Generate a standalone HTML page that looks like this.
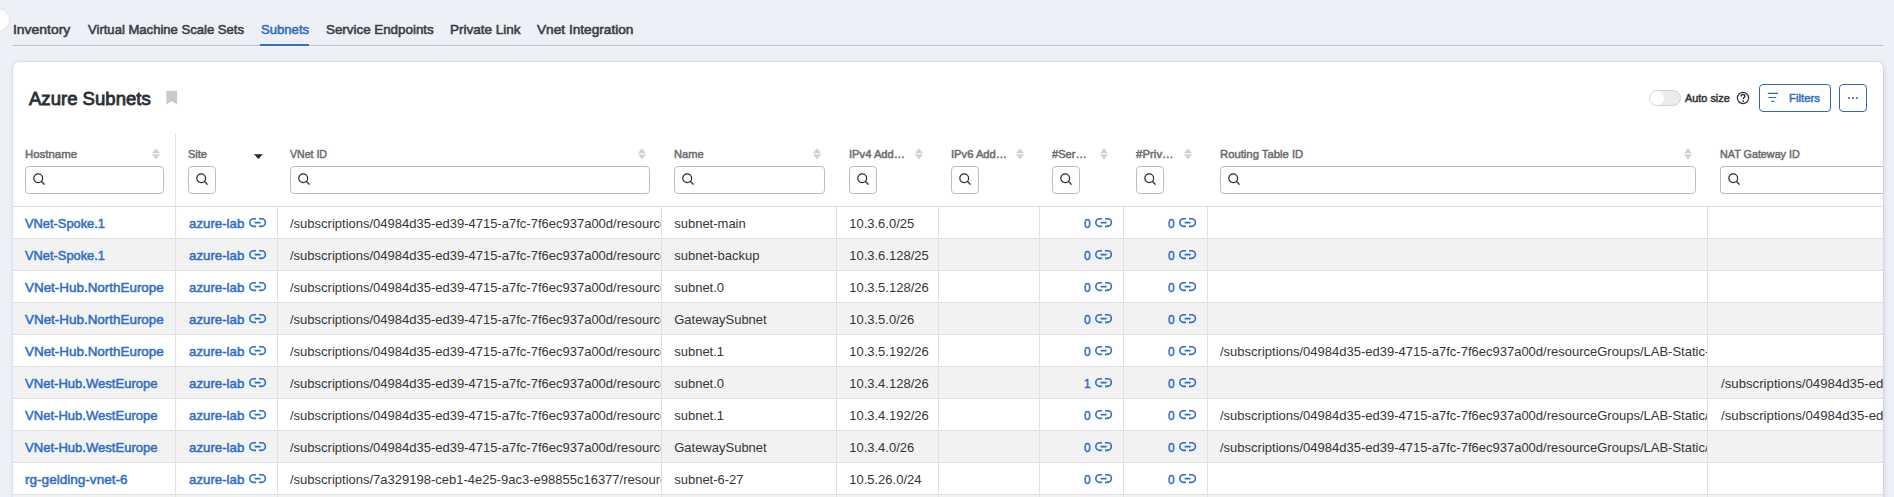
<!DOCTYPE html>
<html><head><meta charset="utf-8"><style>
html,body{margin:0;padding:0;}
body{width:1894px;height:497px;overflow:hidden;background:#edf0f7;position:relative;font-family:"Liberation Sans",sans-serif;}
.t{position:absolute;white-space:nowrap;transform-origin:0 0;}
.r{position:absolute;}
</style></head><body>
<div class="r" style="left:-13px;top:9px;width:22px;height:22px;border-radius:50%;background:#fff;box-shadow:0 0 3px rgba(0,0,0,.12);"></div>
<div class="t" style="left:13.30px;top:22.90px;font-size:13px;line-height:13px;color:#3a3e45;-webkit-text-stroke:0.55px #3a3e45;transform:scaleX(1.0716);">Inventory</div>
<div class="t" style="left:87.70px;top:22.90px;font-size:13px;line-height:13px;color:#3a3e45;-webkit-text-stroke:0.55px #3a3e45;transform:scaleX(1.0057);">Virtual Machine Scale Sets</div>
<div class="t" style="left:260.70px;top:22.90px;font-size:13px;line-height:13px;color:#2f6fc2;-webkit-text-stroke:0.55px #2f6fc2;transform:scaleX(1.0083);">Subnets</div>
<div class="t" style="left:325.60px;top:22.90px;font-size:13px;line-height:13px;color:#3a3e45;-webkit-text-stroke:0.55px #3a3e45;transform:scaleX(1.0279);">Service Endpoints</div>
<div class="t" style="left:449.80px;top:22.90px;font-size:13px;line-height:13px;color:#3a3e45;-webkit-text-stroke:0.55px #3a3e45;transform:scaleX(1.0395);">Private Link</div>
<div class="t" style="left:536.90px;top:22.90px;font-size:13px;line-height:13px;color:#3a3e45;-webkit-text-stroke:0.55px #3a3e45;transform:scaleX(1.0503);">Vnet Integration</div>
<div class="r" style="left:13px;top:45px;width:1870px;height:1px;background:#bcc0c8;"></div>
<div class="r" style="left:13px;top:46px;width:1870px;height:1px;background:#f6f7fa;"></div>
<div class="r" style="left:260px;top:44px;width:49px;height:2px;background:#2f72c8;"></div>
<div class="r" style="left:13px;top:62px;width:1870px;height:480px;background:#fff;border-radius:6px;box-shadow:0 0 0 1px rgba(0,0,0,.045),1px 1px 5px rgba(0,0,0,.12);"></div>
<div class="t" style="left:29.10px;top:89.66px;font-size:18px;line-height:18px;color:#2b2f36;-webkit-text-stroke:0.8px #2b2f36;transform:scaleX(1.0307);">Azure Subnets</div>
<svg class="r" style="left:166px;top:90px" width="12" height="15" viewBox="0 0 12 15"><path d="M0.3 0.8H11.1V14.2L5.7 11.3L0.3 14.2Z" fill="#cacaca"/></svg>
<div class="r" style="left:1649px;top:90px;width:32px;height:16px;box-sizing:border-box;border:1px solid #d3d3d3;border-radius:8px;background:#ebebeb;"></div>
<div class="r" style="left:1650px;top:91px;width:13.5px;height:14px;border-radius:50%;background:#fff;"></div>
<div class="t" style="left:1685.20px;top:92.87px;font-size:10.9px;line-height:10.9px;color:#30343a;-webkit-text-stroke:0.5px #30343a;transform:scaleX(0.9992);">Auto size</div>
<svg class="r" style="left:1736px;top:90.6px" width="14" height="14" viewBox="0 0 14 14"><circle cx="7" cy="7" r="5.6" fill="none" stroke="#2e3238" stroke-width="1.2"/><path d="M5.1 5.4C5.1 4.2 5.9 3.5 7 3.5C8.1 3.5 8.9 4.2 8.9 5.2C8.9 6.5 7.2 6.6 7.2 8.2" fill="none" stroke="#2e3238" stroke-width="1.4"/><circle cx="7.2" cy="10.2" r="0.85" fill="#2e3238"/></svg>
<div class="r" style="left:1759px;top:84px;width:72px;height:28px;box-sizing:border-box;border:1.3px solid #3168ad;border-radius:4px;"></div>
<svg class="r" style="left:1767px;top:92px" width="12" height="11" viewBox="0 0 12 11"><path d="M0.8 1.4H11M1.3 5.5H9.3M4.4 9.3H7.1" stroke="#3168ad" stroke-width="1.2"/></svg>
<div class="t" style="left:1788.80px;top:92.97px;font-size:10.9px;line-height:10.9px;color:#2f6fc0;-webkit-text-stroke:0.5px #2f6fc0;transform:scaleX(1.0448);">Filters</div>
<div class="r" style="left:1839px;top:84px;width:28px;height:28px;box-sizing:border-box;border:1.3px solid #3168ad;border-radius:4px;"></div>
<div class="r" style="left:1848px;top:96.5px;width:2.2px;height:2.2px;border-radius:50%;background:#3168ad;"></div>
<div class="r" style="left:1852.1px;top:96.5px;width:2.2px;height:2.2px;border-radius:50%;background:#3168ad;"></div>
<div class="r" style="left:1856.2px;top:96.5px;width:2.2px;height:2.2px;border-radius:50%;background:#3168ad;"></div>
<div class="r" style="left:175px;top:134px;width:1px;height:72px;background:#e4e4e4;"></div>
<div class="t" style="left:25.40px;top:148.38px;font-size:11.6px;line-height:11.6px;color:#6b6c6f;-webkit-text-stroke:0.5px #6b6c6f;transform:scaleX(0.9836);">Hostname</div>
<svg class="r" style="left:152px;top:147.8px" width="8" height="12" viewBox="0 0 8 12"><path d="M4 0.6L7.6 4.9H0.4Z M4 11.2L7.6 6.6H0.4Z" fill="#d2d2d2" stroke="#d2d2d2" stroke-width="0.5" stroke-linejoin="round"/></svg>
<div class="r" style="left:25px;top:166px;width:139px;height:28px;box-sizing:border-box;border:1px solid #bdbdbd;border-radius:4px;background:#fff;"></div>
<svg class="r" style="left:31.6px;top:172.4px" width="14" height="14" viewBox="0 0 14 14"><circle cx="6.2" cy="6.2" r="4.4" fill="none" stroke="#2b2b2b" stroke-width="1.2"/><path d="M9.3 9.3L12.6 12.6" stroke="#2b2b2b" stroke-width="1.3"/></svg>
<div class="t" style="left:187.60px;top:148.38px;font-size:11.6px;line-height:11.6px;color:#6b6c6f;-webkit-text-stroke:0.5px #6b6c6f;transform:scaleX(0.9505);">Site</div>
<svg class="r" style="left:253.8px;top:154px" width="9" height="5" viewBox="0 0 9 5"><path d="M0.5 0.4H8.3L4.4 4.7Z" fill="#2a2a2a" stroke="#2a2a2a" stroke-width="0.6" stroke-linejoin="round"/></svg>
<div class="r" style="left:188px;top:166px;width:28px;height:28px;box-sizing:border-box;border:1px solid #bdbdbd;border-radius:4px;background:#fff;"></div>
<svg class="r" style="left:194.6px;top:172.4px" width="14" height="14" viewBox="0 0 14 14"><circle cx="6.2" cy="6.2" r="4.4" fill="none" stroke="#2b2b2b" stroke-width="1.2"/><path d="M9.3 9.3L12.6 12.6" stroke="#2b2b2b" stroke-width="1.3"/></svg>
<div class="t" style="left:289.60px;top:148.38px;font-size:11.6px;line-height:11.6px;color:#6b6c6f;-webkit-text-stroke:0.5px #6b6c6f;transform:scaleX(0.9111);">VNet ID</div>
<svg class="r" style="left:638px;top:147.8px" width="8" height="12" viewBox="0 0 8 12"><path d="M4 0.6L7.6 4.9H0.4Z M4 11.2L7.6 6.6H0.4Z" fill="#d2d2d2" stroke="#d2d2d2" stroke-width="0.5" stroke-linejoin="round"/></svg>
<div class="r" style="left:290px;top:166px;width:360px;height:28px;box-sizing:border-box;border:1px solid #bdbdbd;border-radius:4px;background:#fff;"></div>
<svg class="r" style="left:296.6px;top:172.4px" width="14" height="14" viewBox="0 0 14 14"><circle cx="6.2" cy="6.2" r="4.4" fill="none" stroke="#2b2b2b" stroke-width="1.2"/><path d="M9.3 9.3L12.6 12.6" stroke="#2b2b2b" stroke-width="1.3"/></svg>
<div class="t" style="left:673.60px;top:148.38px;font-size:11.6px;line-height:11.6px;color:#6b6c6f;-webkit-text-stroke:0.5px #6b6c6f;transform:scaleX(0.9598);">Name</div>
<svg class="r" style="left:813px;top:147.8px" width="8" height="12" viewBox="0 0 8 12"><path d="M4 0.6L7.6 4.9H0.4Z M4 11.2L7.6 6.6H0.4Z" fill="#d2d2d2" stroke="#d2d2d2" stroke-width="0.5" stroke-linejoin="round"/></svg>
<div class="r" style="left:674px;top:166px;width:151px;height:28px;box-sizing:border-box;border:1px solid #bdbdbd;border-radius:4px;background:#fff;"></div>
<svg class="r" style="left:680.6px;top:172.4px" width="14" height="14" viewBox="0 0 14 14"><circle cx="6.2" cy="6.2" r="4.4" fill="none" stroke="#2b2b2b" stroke-width="1.2"/><path d="M9.3 9.3L12.6 12.6" stroke="#2b2b2b" stroke-width="1.3"/></svg>
<div class="t" style="left:848.60px;top:148.38px;font-size:11.6px;line-height:11.6px;color:#6b6c6f;-webkit-text-stroke:0.5px #6b6c6f;transform:scaleX(0.9649);">IPv4 Add…</div>
<svg class="r" style="left:915px;top:147.8px" width="8" height="12" viewBox="0 0 8 12"><path d="M4 0.6L7.6 4.9H0.4Z M4 11.2L7.6 6.6H0.4Z" fill="#d2d2d2" stroke="#d2d2d2" stroke-width="0.5" stroke-linejoin="round"/></svg>
<div class="r" style="left:849px;top:166px;width:28px;height:28px;box-sizing:border-box;border:1px solid #bdbdbd;border-radius:4px;background:#fff;"></div>
<svg class="r" style="left:855.6px;top:172.4px" width="14" height="14" viewBox="0 0 14 14"><circle cx="6.2" cy="6.2" r="4.4" fill="none" stroke="#2b2b2b" stroke-width="1.2"/><path d="M9.3 9.3L12.6 12.6" stroke="#2b2b2b" stroke-width="1.3"/></svg>
<div class="t" style="left:950.60px;top:148.38px;font-size:11.6px;line-height:11.6px;color:#6b6c6f;-webkit-text-stroke:0.5px #6b6c6f;transform:scaleX(0.9649);">IPv6 Add…</div>
<svg class="r" style="left:1016px;top:147.8px" width="8" height="12" viewBox="0 0 8 12"><path d="M4 0.6L7.6 4.9H0.4Z M4 11.2L7.6 6.6H0.4Z" fill="#d2d2d2" stroke="#d2d2d2" stroke-width="0.5" stroke-linejoin="round"/></svg>
<div class="r" style="left:951px;top:166px;width:28px;height:28px;box-sizing:border-box;border:1px solid #bdbdbd;border-radius:4px;background:#fff;"></div>
<svg class="r" style="left:957.6px;top:172.4px" width="14" height="14" viewBox="0 0 14 14"><circle cx="6.2" cy="6.2" r="4.4" fill="none" stroke="#2b2b2b" stroke-width="1.2"/><path d="M9.3 9.3L12.6 12.6" stroke="#2b2b2b" stroke-width="1.3"/></svg>
<div class="t" style="left:1051.60px;top:148.38px;font-size:11.6px;line-height:11.6px;color:#6b6c6f;-webkit-text-stroke:0.5px #6b6c6f;transform:scaleX(0.9556);">#Ser…</div>
<svg class="r" style="left:1100px;top:147.8px" width="8" height="12" viewBox="0 0 8 12"><path d="M4 0.6L7.6 4.9H0.4Z M4 11.2L7.6 6.6H0.4Z" fill="#d2d2d2" stroke="#d2d2d2" stroke-width="0.5" stroke-linejoin="round"/></svg>
<div class="r" style="left:1052px;top:166px;width:28px;height:28px;box-sizing:border-box;border:1px solid #bdbdbd;border-radius:4px;background:#fff;"></div>
<svg class="r" style="left:1058.6px;top:172.4px" width="14" height="14" viewBox="0 0 14 14"><circle cx="6.2" cy="6.2" r="4.4" fill="none" stroke="#2b2b2b" stroke-width="1.2"/><path d="M9.3 9.3L12.6 12.6" stroke="#2b2b2b" stroke-width="1.3"/></svg>
<div class="t" style="left:1135.60px;top:148.38px;font-size:11.6px;line-height:11.6px;color:#6b6c6f;-webkit-text-stroke:0.5px #6b6c6f;transform:scaleX(0.9887);">#Priv…</div>
<svg class="r" style="left:1184px;top:147.8px" width="8" height="12" viewBox="0 0 8 12"><path d="M4 0.6L7.6 4.9H0.4Z M4 11.2L7.6 6.6H0.4Z" fill="#d2d2d2" stroke="#d2d2d2" stroke-width="0.5" stroke-linejoin="round"/></svg>
<div class="r" style="left:1136px;top:166px;width:28px;height:28px;box-sizing:border-box;border:1px solid #bdbdbd;border-radius:4px;background:#fff;"></div>
<svg class="r" style="left:1142.6px;top:172.4px" width="14" height="14" viewBox="0 0 14 14"><circle cx="6.2" cy="6.2" r="4.4" fill="none" stroke="#2b2b2b" stroke-width="1.2"/><path d="M9.3 9.3L12.6 12.6" stroke="#2b2b2b" stroke-width="1.3"/></svg>
<div class="t" style="left:1219.60px;top:148.38px;font-size:11.6px;line-height:11.6px;color:#6b6c6f;-webkit-text-stroke:0.5px #6b6c6f;transform:scaleX(0.9737);">Routing Table ID</div>
<svg class="r" style="left:1684px;top:147.8px" width="8" height="12" viewBox="0 0 8 12"><path d="M4 0.6L7.6 4.9H0.4Z M4 11.2L7.6 6.6H0.4Z" fill="#d2d2d2" stroke="#d2d2d2" stroke-width="0.5" stroke-linejoin="round"/></svg>
<div class="r" style="left:1220px;top:166px;width:476px;height:28px;box-sizing:border-box;border:1px solid #bdbdbd;border-radius:4px;background:#fff;"></div>
<svg class="r" style="left:1226.6px;top:172.4px" width="14" height="14" viewBox="0 0 14 14"><circle cx="6.2" cy="6.2" r="4.4" fill="none" stroke="#2b2b2b" stroke-width="1.2"/><path d="M9.3 9.3L12.6 12.6" stroke="#2b2b2b" stroke-width="1.3"/></svg>
<div class="t" style="left:1719.60px;top:148.38px;font-size:11.6px;line-height:11.6px;color:#6b6c6f;-webkit-text-stroke:0.5px #6b6c6f;transform:scaleX(0.9284);">NAT Gateway ID</div>
<div class="r" style="left:1720px;top:166px;width:163px;height:28px;box-sizing:border-box;border:1px solid #bdbdbd;border-radius:4px;background:#fff;border-right:none;border-radius:4px 0 0 4px;"></div>
<svg class="r" style="left:1726.6px;top:172.4px" width="14" height="14" viewBox="0 0 14 14"><circle cx="6.2" cy="6.2" r="4.4" fill="none" stroke="#2b2b2b" stroke-width="1.2"/><path d="M9.3 9.3L12.6 12.6" stroke="#2b2b2b" stroke-width="1.3"/></svg>
<div class="r" style="left:13px;top:206px;width:1870px;height:1px;background:#dcdcdc;"></div>
<div class="r" style="left:13px;top:238px;width:1870px;height:1px;background:#e0e0e0;"></div>
<div class="r" style="left:13px;top:239px;width:1870px;height:31px;background:#f2f2f2;"></div>
<div class="r" style="left:13px;top:270px;width:1870px;height:1px;background:#e0e0e0;"></div>
<div class="r" style="left:13px;top:302px;width:1870px;height:1px;background:#e0e0e0;"></div>
<div class="r" style="left:13px;top:303px;width:1870px;height:31px;background:#f2f2f2;"></div>
<div class="r" style="left:13px;top:334px;width:1870px;height:1px;background:#e0e0e0;"></div>
<div class="r" style="left:13px;top:366px;width:1870px;height:1px;background:#e0e0e0;"></div>
<div class="r" style="left:13px;top:367px;width:1870px;height:31px;background:#f2f2f2;"></div>
<div class="r" style="left:13px;top:398px;width:1870px;height:1px;background:#e0e0e0;"></div>
<div class="r" style="left:13px;top:430px;width:1870px;height:1px;background:#e0e0e0;"></div>
<div class="r" style="left:13px;top:431px;width:1870px;height:31px;background:#f2f2f2;"></div>
<div class="r" style="left:13px;top:462px;width:1870px;height:1px;background:#e0e0e0;"></div>
<div class="r" style="left:13px;top:494px;width:1870px;height:1px;background:#e0e0e0;"></div>
<div class="r" style="left:13px;top:495px;width:1870px;height:31px;background:#f2f2f2;"></div>
<div class="r" style="left:13px;top:526px;width:1870px;height:1px;background:#e0e0e0;"></div>
<div class="r" style="left:175px;top:207px;width:1px;height:300px;background:#e0e0e0;"></div>
<div class="r" style="left:277px;top:207px;width:1px;height:300px;background:#e0e0e0;"></div>
<div class="r" style="left:661px;top:207px;width:1px;height:300px;background:#e0e0e0;"></div>
<div class="r" style="left:836px;top:207px;width:1px;height:300px;background:#e0e0e0;"></div>
<div class="r" style="left:938px;top:207px;width:1px;height:300px;background:#e0e0e0;"></div>
<div class="r" style="left:1039px;top:207px;width:1px;height:300px;background:#e0e0e0;"></div>
<div class="r" style="left:1123px;top:207px;width:1px;height:300px;background:#e0e0e0;"></div>
<div class="r" style="left:1207px;top:207px;width:1px;height:300px;background:#e0e0e0;"></div>
<div class="r" style="left:1707px;top:207px;width:1px;height:300px;background:#e0e0e0;"></div>
<div class="t" style="left:25.30px;top:216.54px;font-size:13.3px;line-height:13.3px;color:#2d6ec4;-webkit-text-stroke:0.5px #2d6ec4;transform:scaleX(0.9662);">VNet-Spoke.1</div>
<div class="t" style="left:188.70px;top:216.54px;font-size:13.3px;line-height:13.3px;color:#2d6ec4;-webkit-text-stroke:0.5px #2d6ec4;transform:scaleX(0.9973);">azure-lab</div>
<svg class="r" style="left:248.80px;top:217.80px" width="18" height="10" viewBox="0 0 18 10"><path d="M7 0.8H4.6A3.8 3.8 0 0 0 4.6 8.4H7M10 0.8H12.6A3.8 3.8 0 0 1 12.6 8.4H10M5.6 4.6H11.6" fill="none" stroke="#2d6ec4" stroke-width="1.6"/></svg>
<div class="r" style="left:278px;top:207.8px;width:383px;height:28px;overflow:hidden;">
<div class="t" style="left:12px;top:9.00px;font-size:13px;line-height:13px;color:#363636;">/subscriptions/04984d35-ed39-4715-a7fc-7f6ec937a00d/resourceGroups/LAB</div></div>
<div class="t" style="left:674.20px;top:216.80px;font-size:13px;line-height:13px;color:#363636;">subnet-main</div>
<div class="t" style="left:849.20px;top:216.80px;font-size:13px;line-height:13px;color:#363636;">10.3.6.0/25</div>
<svg class="r" style="left:1094.60px;top:217.80px" width="18" height="10" viewBox="0 0 18 10"><path d="M7 0.8H4.6A3.8 3.8 0 0 0 4.6 8.4H7M10 0.8H12.6A3.8 3.8 0 0 1 12.6 8.4H10M5.6 4.6H11.6" fill="none" stroke="#2d6ec4" stroke-width="1.6"/></svg>
<div class="t" style="left:1084.00px;top:216.54px;font-size:13.3px;line-height:13.3px;color:#2d6ec4;-webkit-text-stroke:0.5px #2d6ec4;transform:scaleX(0.8923);">0</div>
<svg class="r" style="left:1178.60px;top:217.80px" width="18" height="10" viewBox="0 0 18 10"><path d="M7 0.8H4.6A3.8 3.8 0 0 0 4.6 8.4H7M10 0.8H12.6A3.8 3.8 0 0 1 12.6 8.4H10M5.6 4.6H11.6" fill="none" stroke="#2d6ec4" stroke-width="1.6"/></svg>
<div class="t" style="left:1168.00px;top:216.54px;font-size:13.3px;line-height:13.3px;color:#2d6ec4;-webkit-text-stroke:0.5px #2d6ec4;transform:scaleX(0.8923);">0</div>
<div class="t" style="left:25.30px;top:248.54px;font-size:13.3px;line-height:13.3px;color:#2d6ec4;-webkit-text-stroke:0.5px #2d6ec4;transform:scaleX(0.9662);">VNet-Spoke.1</div>
<div class="t" style="left:188.70px;top:248.54px;font-size:13.3px;line-height:13.3px;color:#2d6ec4;-webkit-text-stroke:0.5px #2d6ec4;transform:scaleX(0.9973);">azure-lab</div>
<svg class="r" style="left:248.80px;top:249.80px" width="18" height="10" viewBox="0 0 18 10"><path d="M7 0.8H4.6A3.8 3.8 0 0 0 4.6 8.4H7M10 0.8H12.6A3.8 3.8 0 0 1 12.6 8.4H10M5.6 4.6H11.6" fill="none" stroke="#2d6ec4" stroke-width="1.6"/></svg>
<div class="r" style="left:278px;top:239.8px;width:383px;height:28px;overflow:hidden;">
<div class="t" style="left:12px;top:9.00px;font-size:13px;line-height:13px;color:#363636;">/subscriptions/04984d35-ed39-4715-a7fc-7f6ec937a00d/resourceGroups/LAB</div></div>
<div class="t" style="left:674.20px;top:248.80px;font-size:13px;line-height:13px;color:#363636;">subnet-backup</div>
<div class="t" style="left:849.20px;top:248.80px;font-size:13px;line-height:13px;color:#363636;">10.3.6.128/25</div>
<svg class="r" style="left:1094.60px;top:249.80px" width="18" height="10" viewBox="0 0 18 10"><path d="M7 0.8H4.6A3.8 3.8 0 0 0 4.6 8.4H7M10 0.8H12.6A3.8 3.8 0 0 1 12.6 8.4H10M5.6 4.6H11.6" fill="none" stroke="#2d6ec4" stroke-width="1.6"/></svg>
<div class="t" style="left:1084.00px;top:248.54px;font-size:13.3px;line-height:13.3px;color:#2d6ec4;-webkit-text-stroke:0.5px #2d6ec4;transform:scaleX(0.8923);">0</div>
<svg class="r" style="left:1178.60px;top:249.80px" width="18" height="10" viewBox="0 0 18 10"><path d="M7 0.8H4.6A3.8 3.8 0 0 0 4.6 8.4H7M10 0.8H12.6A3.8 3.8 0 0 1 12.6 8.4H10M5.6 4.6H11.6" fill="none" stroke="#2d6ec4" stroke-width="1.6"/></svg>
<div class="t" style="left:1168.00px;top:248.54px;font-size:13.3px;line-height:13.3px;color:#2d6ec4;-webkit-text-stroke:0.5px #2d6ec4;transform:scaleX(0.8923);">0</div>
<div class="t" style="left:25.30px;top:280.54px;font-size:13.3px;line-height:13.3px;color:#2d6ec4;-webkit-text-stroke:0.5px #2d6ec4;transform:scaleX(1.0094);">VNet-Hub.NorthEurope</div>
<div class="t" style="left:188.70px;top:280.54px;font-size:13.3px;line-height:13.3px;color:#2d6ec4;-webkit-text-stroke:0.5px #2d6ec4;transform:scaleX(0.9973);">azure-lab</div>
<svg class="r" style="left:248.80px;top:281.80px" width="18" height="10" viewBox="0 0 18 10"><path d="M7 0.8H4.6A3.8 3.8 0 0 0 4.6 8.4H7M10 0.8H12.6A3.8 3.8 0 0 1 12.6 8.4H10M5.6 4.6H11.6" fill="none" stroke="#2d6ec4" stroke-width="1.6"/></svg>
<div class="r" style="left:278px;top:271.8px;width:383px;height:28px;overflow:hidden;">
<div class="t" style="left:12px;top:9.00px;font-size:13px;line-height:13px;color:#363636;">/subscriptions/04984d35-ed39-4715-a7fc-7f6ec937a00d/resourceGroups/LAB</div></div>
<div class="t" style="left:674.20px;top:280.80px;font-size:13px;line-height:13px;color:#363636;">subnet.0</div>
<div class="t" style="left:849.20px;top:280.80px;font-size:13px;line-height:13px;color:#363636;">10.3.5.128/26</div>
<svg class="r" style="left:1094.60px;top:281.80px" width="18" height="10" viewBox="0 0 18 10"><path d="M7 0.8H4.6A3.8 3.8 0 0 0 4.6 8.4H7M10 0.8H12.6A3.8 3.8 0 0 1 12.6 8.4H10M5.6 4.6H11.6" fill="none" stroke="#2d6ec4" stroke-width="1.6"/></svg>
<div class="t" style="left:1084.00px;top:280.54px;font-size:13.3px;line-height:13.3px;color:#2d6ec4;-webkit-text-stroke:0.5px #2d6ec4;transform:scaleX(0.8923);">0</div>
<svg class="r" style="left:1178.60px;top:281.80px" width="18" height="10" viewBox="0 0 18 10"><path d="M7 0.8H4.6A3.8 3.8 0 0 0 4.6 8.4H7M10 0.8H12.6A3.8 3.8 0 0 1 12.6 8.4H10M5.6 4.6H11.6" fill="none" stroke="#2d6ec4" stroke-width="1.6"/></svg>
<div class="t" style="left:1168.00px;top:280.54px;font-size:13.3px;line-height:13.3px;color:#2d6ec4;-webkit-text-stroke:0.5px #2d6ec4;transform:scaleX(0.8923);">0</div>
<div class="t" style="left:25.30px;top:312.54px;font-size:13.3px;line-height:13.3px;color:#2d6ec4;-webkit-text-stroke:0.5px #2d6ec4;transform:scaleX(1.0094);">VNet-Hub.NorthEurope</div>
<div class="t" style="left:188.70px;top:312.54px;font-size:13.3px;line-height:13.3px;color:#2d6ec4;-webkit-text-stroke:0.5px #2d6ec4;transform:scaleX(0.9973);">azure-lab</div>
<svg class="r" style="left:248.80px;top:313.80px" width="18" height="10" viewBox="0 0 18 10"><path d="M7 0.8H4.6A3.8 3.8 0 0 0 4.6 8.4H7M10 0.8H12.6A3.8 3.8 0 0 1 12.6 8.4H10M5.6 4.6H11.6" fill="none" stroke="#2d6ec4" stroke-width="1.6"/></svg>
<div class="r" style="left:278px;top:303.8px;width:383px;height:28px;overflow:hidden;">
<div class="t" style="left:12px;top:9.00px;font-size:13px;line-height:13px;color:#363636;">/subscriptions/04984d35-ed39-4715-a7fc-7f6ec937a00d/resourceGroups/LAB</div></div>
<div class="t" style="left:674.20px;top:312.80px;font-size:13px;line-height:13px;color:#363636;">GatewaySubnet</div>
<div class="t" style="left:849.20px;top:312.80px;font-size:13px;line-height:13px;color:#363636;">10.3.5.0/26</div>
<svg class="r" style="left:1094.60px;top:313.80px" width="18" height="10" viewBox="0 0 18 10"><path d="M7 0.8H4.6A3.8 3.8 0 0 0 4.6 8.4H7M10 0.8H12.6A3.8 3.8 0 0 1 12.6 8.4H10M5.6 4.6H11.6" fill="none" stroke="#2d6ec4" stroke-width="1.6"/></svg>
<div class="t" style="left:1084.00px;top:312.54px;font-size:13.3px;line-height:13.3px;color:#2d6ec4;-webkit-text-stroke:0.5px #2d6ec4;transform:scaleX(0.8923);">0</div>
<svg class="r" style="left:1178.60px;top:313.80px" width="18" height="10" viewBox="0 0 18 10"><path d="M7 0.8H4.6A3.8 3.8 0 0 0 4.6 8.4H7M10 0.8H12.6A3.8 3.8 0 0 1 12.6 8.4H10M5.6 4.6H11.6" fill="none" stroke="#2d6ec4" stroke-width="1.6"/></svg>
<div class="t" style="left:1168.00px;top:312.54px;font-size:13.3px;line-height:13.3px;color:#2d6ec4;-webkit-text-stroke:0.5px #2d6ec4;transform:scaleX(0.8923);">0</div>
<div class="t" style="left:25.30px;top:344.54px;font-size:13.3px;line-height:13.3px;color:#2d6ec4;-webkit-text-stroke:0.5px #2d6ec4;transform:scaleX(1.0094);">VNet-Hub.NorthEurope</div>
<div class="t" style="left:188.70px;top:344.54px;font-size:13.3px;line-height:13.3px;color:#2d6ec4;-webkit-text-stroke:0.5px #2d6ec4;transform:scaleX(0.9973);">azure-lab</div>
<svg class="r" style="left:248.80px;top:345.80px" width="18" height="10" viewBox="0 0 18 10"><path d="M7 0.8H4.6A3.8 3.8 0 0 0 4.6 8.4H7M10 0.8H12.6A3.8 3.8 0 0 1 12.6 8.4H10M5.6 4.6H11.6" fill="none" stroke="#2d6ec4" stroke-width="1.6"/></svg>
<div class="r" style="left:278px;top:335.8px;width:383px;height:28px;overflow:hidden;">
<div class="t" style="left:12px;top:9.00px;font-size:13px;line-height:13px;color:#363636;">/subscriptions/04984d35-ed39-4715-a7fc-7f6ec937a00d/resourceGroups/LAB</div></div>
<div class="t" style="left:674.20px;top:344.80px;font-size:13px;line-height:13px;color:#363636;">subnet.1</div>
<div class="t" style="left:849.20px;top:344.80px;font-size:13px;line-height:13px;color:#363636;">10.3.5.192/26</div>
<svg class="r" style="left:1094.60px;top:345.80px" width="18" height="10" viewBox="0 0 18 10"><path d="M7 0.8H4.6A3.8 3.8 0 0 0 4.6 8.4H7M10 0.8H12.6A3.8 3.8 0 0 1 12.6 8.4H10M5.6 4.6H11.6" fill="none" stroke="#2d6ec4" stroke-width="1.6"/></svg>
<div class="t" style="left:1084.00px;top:344.54px;font-size:13.3px;line-height:13.3px;color:#2d6ec4;-webkit-text-stroke:0.5px #2d6ec4;transform:scaleX(0.8923);">0</div>
<svg class="r" style="left:1178.60px;top:345.80px" width="18" height="10" viewBox="0 0 18 10"><path d="M7 0.8H4.6A3.8 3.8 0 0 0 4.6 8.4H7M10 0.8H12.6A3.8 3.8 0 0 1 12.6 8.4H10M5.6 4.6H11.6" fill="none" stroke="#2d6ec4" stroke-width="1.6"/></svg>
<div class="t" style="left:1168.00px;top:344.54px;font-size:13.3px;line-height:13.3px;color:#2d6ec4;-webkit-text-stroke:0.5px #2d6ec4;transform:scaleX(0.8923);">0</div>
<div class="r" style="left:1208px;top:335.8px;width:499px;height:28px;overflow:hidden;">
<div class="t" style="left:12px;top:9.00px;font-size:13px;line-height:13px;color:#363636;">/subscriptions/04984d35-ed39-4715-a7fc-7f6ec937a00d/resourceGroups/LAB-Static-Routes</div></div>
<div class="t" style="left:25.30px;top:376.54px;font-size:13.3px;line-height:13.3px;color:#2d6ec4;-webkit-text-stroke:0.5px #2d6ec4;transform:scaleX(0.9820);">VNet-Hub.WestEurope</div>
<div class="t" style="left:188.70px;top:376.54px;font-size:13.3px;line-height:13.3px;color:#2d6ec4;-webkit-text-stroke:0.5px #2d6ec4;transform:scaleX(0.9973);">azure-lab</div>
<svg class="r" style="left:248.80px;top:377.80px" width="18" height="10" viewBox="0 0 18 10"><path d="M7 0.8H4.6A3.8 3.8 0 0 0 4.6 8.4H7M10 0.8H12.6A3.8 3.8 0 0 1 12.6 8.4H10M5.6 4.6H11.6" fill="none" stroke="#2d6ec4" stroke-width="1.6"/></svg>
<div class="r" style="left:278px;top:367.8px;width:383px;height:28px;overflow:hidden;">
<div class="t" style="left:12px;top:9.00px;font-size:13px;line-height:13px;color:#363636;">/subscriptions/04984d35-ed39-4715-a7fc-7f6ec937a00d/resourceGroups/LAB</div></div>
<div class="t" style="left:674.20px;top:376.80px;font-size:13px;line-height:13px;color:#363636;">subnet.0</div>
<div class="t" style="left:849.20px;top:376.80px;font-size:13px;line-height:13px;color:#363636;">10.3.4.128/26</div>
<svg class="r" style="left:1094.60px;top:377.80px" width="18" height="10" viewBox="0 0 18 10"><path d="M7 0.8H4.6A3.8 3.8 0 0 0 4.6 8.4H7M10 0.8H12.6A3.8 3.8 0 0 1 12.6 8.4H10M5.6 4.6H11.6" fill="none" stroke="#2d6ec4" stroke-width="1.6"/></svg>
<div class="t" style="left:1084.00px;top:376.54px;font-size:13.3px;line-height:13.3px;color:#2d6ec4;-webkit-text-stroke:0.5px #2d6ec4;transform:scaleX(0.8923);">1</div>
<svg class="r" style="left:1178.60px;top:377.80px" width="18" height="10" viewBox="0 0 18 10"><path d="M7 0.8H4.6A3.8 3.8 0 0 0 4.6 8.4H7M10 0.8H12.6A3.8 3.8 0 0 1 12.6 8.4H10M5.6 4.6H11.6" fill="none" stroke="#2d6ec4" stroke-width="1.6"/></svg>
<div class="t" style="left:1168.00px;top:376.54px;font-size:13.3px;line-height:13.3px;color:#2d6ec4;-webkit-text-stroke:0.5px #2d6ec4;transform:scaleX(0.8923);">0</div>
<div class="r" style="left:1708px;top:367.8px;width:175px;height:28px;overflow:hidden;">
<div class="t" style="left:12.6px;top:9.00px;font-size:13px;line-height:13px;color:#363636;transform:scaleX(1.017);">/subscriptions/04984d35-ed</div></div>
<div class="t" style="left:25.30px;top:408.54px;font-size:13.3px;line-height:13.3px;color:#2d6ec4;-webkit-text-stroke:0.5px #2d6ec4;transform:scaleX(0.9820);">VNet-Hub.WestEurope</div>
<div class="t" style="left:188.70px;top:408.54px;font-size:13.3px;line-height:13.3px;color:#2d6ec4;-webkit-text-stroke:0.5px #2d6ec4;transform:scaleX(0.9973);">azure-lab</div>
<svg class="r" style="left:248.80px;top:409.80px" width="18" height="10" viewBox="0 0 18 10"><path d="M7 0.8H4.6A3.8 3.8 0 0 0 4.6 8.4H7M10 0.8H12.6A3.8 3.8 0 0 1 12.6 8.4H10M5.6 4.6H11.6" fill="none" stroke="#2d6ec4" stroke-width="1.6"/></svg>
<div class="r" style="left:278px;top:399.8px;width:383px;height:28px;overflow:hidden;">
<div class="t" style="left:12px;top:9.00px;font-size:13px;line-height:13px;color:#363636;">/subscriptions/04984d35-ed39-4715-a7fc-7f6ec937a00d/resourceGroups/LAB</div></div>
<div class="t" style="left:674.20px;top:408.80px;font-size:13px;line-height:13px;color:#363636;">subnet.1</div>
<div class="t" style="left:849.20px;top:408.80px;font-size:13px;line-height:13px;color:#363636;">10.3.4.192/26</div>
<svg class="r" style="left:1094.60px;top:409.80px" width="18" height="10" viewBox="0 0 18 10"><path d="M7 0.8H4.6A3.8 3.8 0 0 0 4.6 8.4H7M10 0.8H12.6A3.8 3.8 0 0 1 12.6 8.4H10M5.6 4.6H11.6" fill="none" stroke="#2d6ec4" stroke-width="1.6"/></svg>
<div class="t" style="left:1084.00px;top:408.54px;font-size:13.3px;line-height:13.3px;color:#2d6ec4;-webkit-text-stroke:0.5px #2d6ec4;transform:scaleX(0.8923);">0</div>
<svg class="r" style="left:1178.60px;top:409.80px" width="18" height="10" viewBox="0 0 18 10"><path d="M7 0.8H4.6A3.8 3.8 0 0 0 4.6 8.4H7M10 0.8H12.6A3.8 3.8 0 0 1 12.6 8.4H10M5.6 4.6H11.6" fill="none" stroke="#2d6ec4" stroke-width="1.6"/></svg>
<div class="t" style="left:1168.00px;top:408.54px;font-size:13.3px;line-height:13.3px;color:#2d6ec4;-webkit-text-stroke:0.5px #2d6ec4;transform:scaleX(0.8923);">0</div>
<div class="r" style="left:1208px;top:399.8px;width:499px;height:28px;overflow:hidden;">
<div class="t" style="left:12px;top:9.00px;font-size:13px;line-height:13px;color:#363636;">/subscriptions/04984d35-ed39-4715-a7fc-7f6ec937a00d/resourceGroups/LAB-Static/Routes</div></div>
<div class="r" style="left:1708px;top:399.8px;width:175px;height:28px;overflow:hidden;">
<div class="t" style="left:12.6px;top:9.00px;font-size:13px;line-height:13px;color:#363636;transform:scaleX(1.017);">/subscriptions/04984d35-ed</div></div>
<div class="t" style="left:25.30px;top:440.54px;font-size:13.3px;line-height:13.3px;color:#2d6ec4;-webkit-text-stroke:0.5px #2d6ec4;transform:scaleX(0.9820);">VNet-Hub.WestEurope</div>
<div class="t" style="left:188.70px;top:440.54px;font-size:13.3px;line-height:13.3px;color:#2d6ec4;-webkit-text-stroke:0.5px #2d6ec4;transform:scaleX(0.9973);">azure-lab</div>
<svg class="r" style="left:248.80px;top:441.80px" width="18" height="10" viewBox="0 0 18 10"><path d="M7 0.8H4.6A3.8 3.8 0 0 0 4.6 8.4H7M10 0.8H12.6A3.8 3.8 0 0 1 12.6 8.4H10M5.6 4.6H11.6" fill="none" stroke="#2d6ec4" stroke-width="1.6"/></svg>
<div class="r" style="left:278px;top:431.8px;width:383px;height:28px;overflow:hidden;">
<div class="t" style="left:12px;top:9.00px;font-size:13px;line-height:13px;color:#363636;">/subscriptions/04984d35-ed39-4715-a7fc-7f6ec937a00d/resourceGroups/LAB</div></div>
<div class="t" style="left:674.20px;top:440.80px;font-size:13px;line-height:13px;color:#363636;">GatewaySubnet</div>
<div class="t" style="left:849.20px;top:440.80px;font-size:13px;line-height:13px;color:#363636;">10.3.4.0/26</div>
<svg class="r" style="left:1094.60px;top:441.80px" width="18" height="10" viewBox="0 0 18 10"><path d="M7 0.8H4.6A3.8 3.8 0 0 0 4.6 8.4H7M10 0.8H12.6A3.8 3.8 0 0 1 12.6 8.4H10M5.6 4.6H11.6" fill="none" stroke="#2d6ec4" stroke-width="1.6"/></svg>
<div class="t" style="left:1084.00px;top:440.54px;font-size:13.3px;line-height:13.3px;color:#2d6ec4;-webkit-text-stroke:0.5px #2d6ec4;transform:scaleX(0.8923);">0</div>
<svg class="r" style="left:1178.60px;top:441.80px" width="18" height="10" viewBox="0 0 18 10"><path d="M7 0.8H4.6A3.8 3.8 0 0 0 4.6 8.4H7M10 0.8H12.6A3.8 3.8 0 0 1 12.6 8.4H10M5.6 4.6H11.6" fill="none" stroke="#2d6ec4" stroke-width="1.6"/></svg>
<div class="t" style="left:1168.00px;top:440.54px;font-size:13.3px;line-height:13.3px;color:#2d6ec4;-webkit-text-stroke:0.5px #2d6ec4;transform:scaleX(0.8923);">0</div>
<div class="r" style="left:1208px;top:431.8px;width:499px;height:28px;overflow:hidden;">
<div class="t" style="left:12px;top:9.00px;font-size:13px;line-height:13px;color:#363636;">/subscriptions/04984d35-ed39-4715-a7fc-7f6ec937a00d/resourceGroups/LAB-Static/Routes</div></div>
<div class="t" style="left:25.30px;top:472.54px;font-size:13.3px;line-height:13.3px;color:#2d6ec4;-webkit-text-stroke:0.5px #2d6ec4;transform:scaleX(1.0205);">rg-gelding-vnet-6</div>
<div class="t" style="left:188.70px;top:472.54px;font-size:13.3px;line-height:13.3px;color:#2d6ec4;-webkit-text-stroke:0.5px #2d6ec4;transform:scaleX(0.9973);">azure-lab</div>
<svg class="r" style="left:248.80px;top:473.80px" width="18" height="10" viewBox="0 0 18 10"><path d="M7 0.8H4.6A3.8 3.8 0 0 0 4.6 8.4H7M10 0.8H12.6A3.8 3.8 0 0 1 12.6 8.4H10M5.6 4.6H11.6" fill="none" stroke="#2d6ec4" stroke-width="1.6"/></svg>
<div class="r" style="left:278px;top:463.8px;width:383px;height:28px;overflow:hidden;">
<div class="t" style="left:12px;top:9.00px;font-size:13px;line-height:13px;color:#363636;">/subscriptions/7a329198-ceb1-4e25-9ac3-e98855c16377/resourceGroups/rg</div></div>
<div class="t" style="left:674.20px;top:472.80px;font-size:13px;line-height:13px;color:#363636;">subnet-6-27</div>
<div class="t" style="left:849.20px;top:472.80px;font-size:13px;line-height:13px;color:#363636;">10.5.26.0/24</div>
<svg class="r" style="left:1094.60px;top:473.80px" width="18" height="10" viewBox="0 0 18 10"><path d="M7 0.8H4.6A3.8 3.8 0 0 0 4.6 8.4H7M10 0.8H12.6A3.8 3.8 0 0 1 12.6 8.4H10M5.6 4.6H11.6" fill="none" stroke="#2d6ec4" stroke-width="1.6"/></svg>
<div class="t" style="left:1084.00px;top:472.54px;font-size:13.3px;line-height:13.3px;color:#2d6ec4;-webkit-text-stroke:0.5px #2d6ec4;transform:scaleX(0.8923);">0</div>
<svg class="r" style="left:1178.60px;top:473.80px" width="18" height="10" viewBox="0 0 18 10"><path d="M7 0.8H4.6A3.8 3.8 0 0 0 4.6 8.4H7M10 0.8H12.6A3.8 3.8 0 0 1 12.6 8.4H10M5.6 4.6H11.6" fill="none" stroke="#2d6ec4" stroke-width="1.6"/></svg>
<div class="t" style="left:1168.00px;top:472.54px;font-size:13.3px;line-height:13.3px;color:#2d6ec4;-webkit-text-stroke:0.5px #2d6ec4;transform:scaleX(0.8923);">0</div>
</body></html>
